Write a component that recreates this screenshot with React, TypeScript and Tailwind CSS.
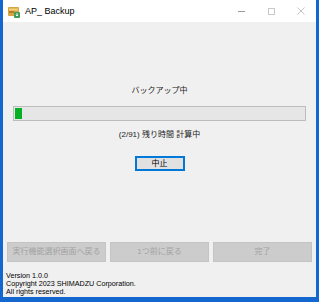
import React from 'react';

const font = { fontFamily: '"Liberation Sans", "Noto Sans CJK JP", sans-serif' };

const AppIcon = () => (
  <svg width="12" height="12" viewBox="0 0 12 12">
    <rect x="0" y="1" width="11" height="9" rx="1" fill="#d9a441" />
    <rect x="1" y="2.5" width="9" height="2" fill="#f3d27a" />
    <rect x="1" y="5.5" width="5" height="1" fill="#8a5a12" />
    <rect x="6" y="6" width="6" height="6" rx="1" fill="#3f9a55" />
    <path d="M9 7v3M7.8 8.8 9 10l1.2-1.2" stroke="#fff" strokeWidth="0.9" fill="none" />
  </svg>
);

const FooterButton = ({ label }: { label: string }) => (
  <button
    disabled
    className="flex-1 h-[20px] bg-[#cccccc] border border-[#c4c4c4] text-[8px] whitespace-nowrap text-[#a3a3a3] flex items-center justify-center"
  >
    {label}
  </button>
);

export default function App() {
  return (
    <div className="w-[319px] h-[302px] bg-[#1467cf] overflow-hidden" style={font}>
      <div className="ml-[3px] w-[313px] h-[297px] flex flex-col bg-[#f0f0f0]">
        {/* title bar */}
        <div className="h-[22px] bg-white flex items-center">
          <div className="ml-[5px] mt-[2px]">
            <AppIcon />
          </div>
          <span className="ml-[5px] mt-[2px] text-[9px] text-black">AP_ Backup</span>
          <div className="ml-auto flex items-center h-full text-[#b5b5b5]">
            <div className="w-[30px] flex justify-center">
              <div className="w-[7px] h-px bg-[#9a9a9a]" />
            </div>
            <div className="w-[30px] flex justify-center">
              <div className="w-[7px] h-[7px] border border-[#c9c9c9]" />
            </div>
            <div className="w-[30px] flex justify-center">
              <svg width="8" height="8" viewBox="0 0 8 8">
                <path d="M0.5 0.5 7.5 7.5M7.5 0.5 0.5 7.5" stroke="#c4c4c4" strokeWidth="1" />
              </svg>
            </div>
          </div>
        </div>

        {/* body */}
        <div className="flex-1 flex flex-col">
          <div className="mt-[63px] text-center text-[8px] text-[#222] leading-[12px]">バックアップ中</div>
          <div className="mt-[9px] mx-[10px] h-[15px] bg-[#e6e6e6] border border-[#bcbcbc] p-px">
            <div className="w-[7px] h-full bg-[#06b025]" />
          </div>
          <div className="mt-[8px] text-center text-[8px] text-[#222] leading-[12px]">(2/91) 残り時間 計算中</div>
          <div className="mt-[15px] flex justify-center">
            <button className="w-[50px] h-[15px] bg-[#e1e1e1] border border-[#0078d7] shadow-[inset_0_0_0_1px_#0078d7] text-[8px] text-black flex items-center justify-center">
              中止
            </button>
          </div>

          <div className="mt-[71px] px-[4px] flex gap-[4px]">
            <FooterButton label="実行機能選択画面へ戻る" />
            <FooterButton label="1つ前に戻る" />
            <FooterButton label="完了" />
          </div>

          <div className="mt-auto mb-[1px] ml-[3px] text-[7.2px] text-black leading-[8px]">
            <div>Version 1.0.0</div>
            <div>Copyright 2023 SHIMADZU Corporation.</div>
            <div>All rights reserved.</div>
          </div>
        </div>
      </div>
    </div>
  );
}
